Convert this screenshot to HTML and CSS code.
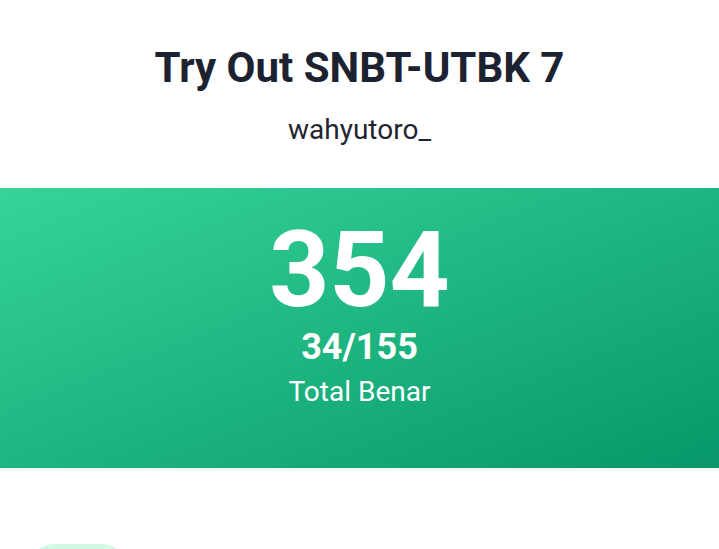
FILE: index.html
```html
<!DOCTYPE html>
<html lang="id">
<head>
<meta charset="utf-8">
<title>Try Out SNBT-UTBK 7</title>
<link rel="stylesheet" href="styles.css">
</head>
<body>
<div class="page">
  <header class="header">
    <h1 class="title">Try Out SNBT-UTBK 7</h1>
    <p class="user">wahyutoro_</p>
  </header>
  <section class="score">
    <div class="score-value">354</div>
    <div class="score-ratio">34/155</div>
    <div class="score-label">Total Benar</div>
  </section>
  <section class="details">
    <div class="badge"></div>
  </section>
</div>
</body>
</html>
```
FILE: styles.css
```css
html, body {
  margin: 0;
  padding: 0;
  background: #ffffff;
  font-family: Roboto, "Liberation Sans", sans-serif;
  overflow: hidden;
}
.page {
  width: 719px;
  height: 549px;
  display: flex;
  flex-direction: column;
  overflow: hidden;
}
.header {
  height: 188px;
  flex-shrink: 0;
  display: flex;
  flex-direction: column;
  align-items: center;
  box-sizing: border-box;
  padding-top: 43px;
}
.title {
  margin: 0;
  font-size: 42px;
  line-height: 50px;
  font-weight: 700;
  color: #1c2230;
}
.user {
  margin: 21px 0 0;
  font-size: 28px;
  line-height: 32px;
  font-weight: 400;
  color: #1f2530;
}
.score {
  height: 280px;
  flex-shrink: 0;
  background: linear-gradient(to bottom right, #36d498, #07976a);
  color: #ffffff;
  display: flex;
  flex-direction: column;
  align-items: center;
  box-sizing: border-box;
  padding-top: 28px;
  box-shadow: 0 2px 4px rgba(0, 0, 0, 0.05);
}
.score-value {
  font-size: 105px;
  line-height: 110px;
  font-weight: 700;
}
.score-ratio {
  font-size: 36px;
  line-height: 40px;
  font-weight: 700;
  margin-top: 1px;
}
.score-label {
  font-size: 28px;
  line-height: 34px;
  margin-top: 8px;
}
.details {
  flex: 1;
  min-height: 0;
  overflow: hidden;
  padding: 76px 30px 0;
}
.badge {
  width: 96px;
  height: 96px;
  border-radius: 24px;
  background: #d1fae5;
}
```
